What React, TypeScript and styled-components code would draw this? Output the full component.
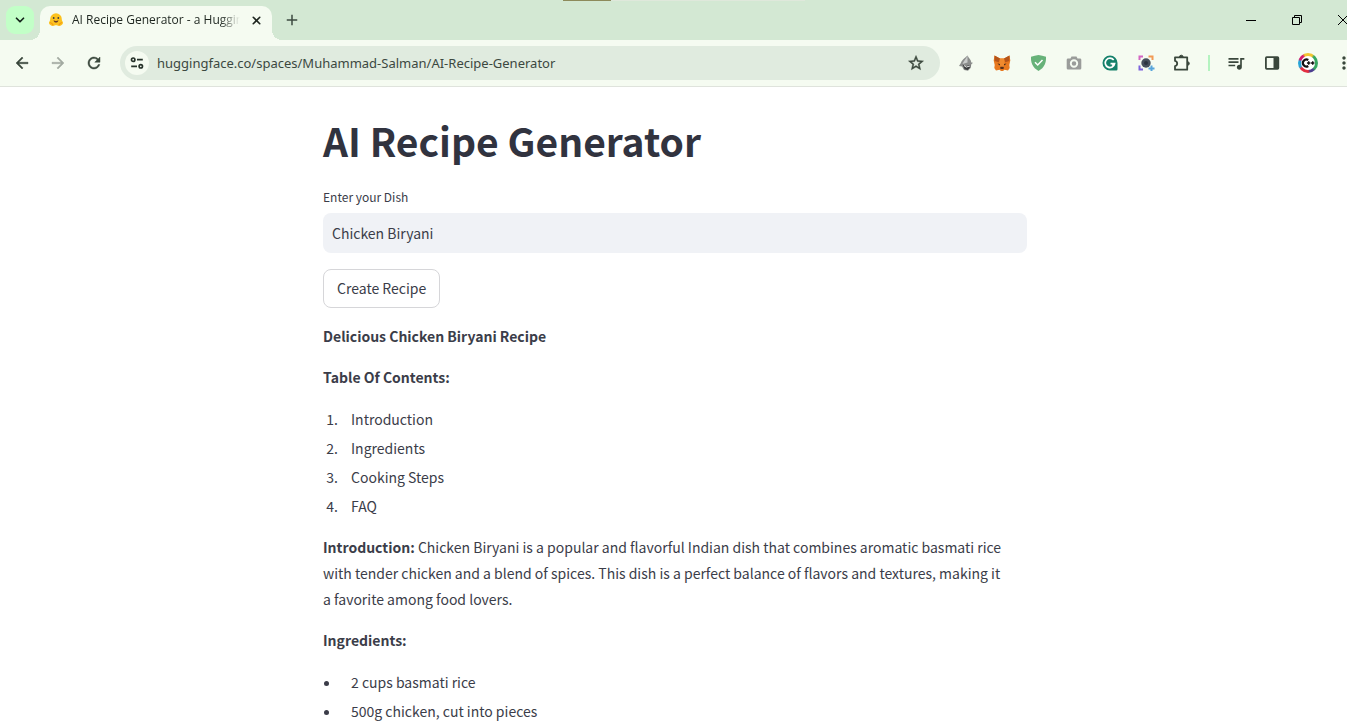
import React, { useState } from "react";
import styled, { createGlobalStyle, css } from "styled-components";
import { ChevronDown, X } from "lucide-react";
import {
  MdAdd,
  MdArrowBack,
  MdArrowForward,
  MdMoreVert,
  MdQueueMusic,
  MdRefresh,
  MdStarBorder,
} from "react-icons/md";

const Global = createGlobalStyle`
  * { box-sizing: border-box; }
  html, body { margin: 0; overflow: hidden; background: #fff; }
  button { font: inherit; color: inherit; border: 0; background: none; padding: 0; cursor: pointer; }
`;

const uiFont = `"Noto Sans", "Open Sans", sans-serif`;
const pageFont = `"Noto Sans CJK SC", "Noto Sans CJK JP", sans-serif`;

/* The window runs past the right edge of the viewport, as a maximised one does. */
const Window = styled.div`
  width: calc(100% + 19px);
  font-family: ${uiFont};
`;

const TabStrip = styled.header`
  display: flex;
  align-items: flex-start;
  height: 40px;
  padding-left: 6px;
  background: #d3e8d3;
  position: relative;
`;

const TabSearch = styled.button`
  display: grid;
  place-items: center;
  width: 28px;
  height: 28px;
  margin: 6px 6px 0 0;
  border-radius: 9px;
  background: #c2ffc7;
  color: #14231a;
`;

const Tab = styled.div`
  position: relative;
  display: flex;
  align-items: center;
  width: 232px;
  height: 34px;
  margin-top: 6px;
  padding: 0 6px 6px 8px;
  border-radius: 10px 10px 0 0;
  background: #f5fbf1;

  &::before,
  &::after {
    content: "";
    position: absolute;
    bottom: 0;
    width: 10px;
    height: 10px;
  }
  &::before {
    right: 100%;
    background: radial-gradient(circle at 0 0, transparent 10px, #f5fbf1 10px);
  }
  &::after {
    left: 100%;
    background: radial-gradient(circle at 100% 0, transparent 10px, #f5fbf1 10px);
  }
`;

const TabTitle = styled.span`
  flex: 1;
  margin-left: 8px;
  overflow: hidden;
  white-space: nowrap;
  font-family: "Open Sans", "Noto Sans", sans-serif;
  font-size: 12px;
  line-height: 20px;
  color: #1d251f;
  mask-image: linear-gradient(to right, #000 calc(100% - 20px), transparent);
`;

const StripButton = styled.button`
  display: grid;
  place-items: center;
  width: 20px;
  height: 20px;
  margin-left: 6px;
  color: #1d251f;
`;

const NewTab = styled(StripButton)`
  margin: 10px 0 0 10px;
  color: #3d4a40;
`;

const WindowControls = styled.div`
  display: flex;
  margin-left: auto;
`;

const WindowButton = styled.button`
  display: grid;
  place-items: center;
  width: 46px;
  height: 40px;
`;

/* Sliver of the screen recorder bar docked at the top of the display. */
const DockedBar = styled.div`
  position: absolute;
  top: 0;
  left: 563px;
  width: 242px;
  height: 1px;
  background: linear-gradient(to right, #8d8a5b 48px, #dfe8db 48px);
`;

const Toolbar = styled.nav`
  display: flex;
  align-items: center;
  height: 47px;
  padding: 0 4px;
  background: #f5fbf1;
  border-bottom: 1px solid #dfe3dc;
`;

const ToolButton = styled.button<{ $muted?: boolean; $heavy?: boolean }>`
  display: grid;
  place-items: center;
  width: 36px;
  height: 34px;
  color: ${(p) => (p.$muted ? "#a3aba2" : "#3a473c")};

  ${(p) =>
    p.$heavy &&
    css`
      path:not([fill="none"]) {
        stroke: currentColor;
        stroke-width: 0.6px;
      }
    `}
`;

const AddressBar = styled.div`
  flex: 1;
  display: flex;
  align-items: center;
  height: 34px;
  margin: 0 8px;
  padding: 0 6px 0 5px;
  border-radius: 17px;
  background: #e0ebdf;
`;

const SiteInfo = styled.button`
  display: grid;
  place-items: center;
  width: 24px;
  height: 24px;
  border-radius: 12px;
  background: #f5fbf1;
`;

const Url = styled.input`
  flex: 1;
  min-width: 0;
  margin-left: 8px;
  padding: 0;
  border: 0;
  outline: 0;
  background: transparent;
  font-family: ${uiFont};
  font-size: 13px;
  line-height: 20px;
  color: #3c483f;
`;

const Divider = styled.span`
  width: 2px;
  height: 16px;
  margin: 0 8px;
  background: #b4f3c0;
`;

const Page = styled.div`
  padding: 27px 16px 0 0;
`;

const Main = styled.main`
  max-width: 704px;
  margin: 0 auto;
  font-family: ${pageFont};
  font-size: 14px;
  line-height: 26px;
  color: #3b3d49;
`;

const Title = styled.h1`
  margin: 0;
  font-size: 39px;
  line-height: 52px;
  font-weight: 700;
  color: #31333f;
`;

const Field = styled.div`
  display: flex;
  flex-direction: column;
  margin-top: 21px;
`;

const Label = styled.label`
  font-size: 12px;
  line-height: 20px;
  margin-bottom: 6px;
`;

const DishInput = styled.input`
  height: 40px;
  padding: 0 9px;
  border: 0;
  border-radius: 8px;
  outline: 0;
  background: #f0f2f6;
  font: inherit;
  color: inherit;
`;

const CreateButton = styled.button`
  display: block;
  height: 39px;
  margin: 16px 0 15px;
  padding: 0 13px 2px;
  border: 1px solid #d6d6d9;
  border-radius: 8px;
  background: #fff;
`;

const Paragraph = styled.p`
  margin: 0 0 15px;
`;

const Strong = styled.strong`
  font-weight: 600;
`;

const listStyle = css`
  margin: 0 0 13px;
  padding: 0;
  li {
    margin-left: 18px;
    padding: 1px 0 2px 10px;
  }
`;

const NumberedList = styled.ol`
  ${listStyle}
`;

const BulletList = styled.ul`
  ${listStyle}
`;

const HuggingFace = () => (
  <svg width="16" height="16" viewBox="0 0 16 16">
    <path d="M8 1.2a5.8 5.8 0 0 1 5.8 5.8c0 1 .1 1.700 .7 2.400.9 1.100.5 2.500-.5 3.300-1.400 1.200-3.300 1.600-4.600.9-.9-.5-1.900-.5-2.800 0-1.300.7-3.200.3-4.600-.9-1-.8-1.400-2.200-.5-3.300.6-.7.7-1.400.7-2.400A5.800 5.800 0 0 1 8 1.200Z" fill="#fcc21f" />
    <path d="M2 10.500c1 .2 2.300 1 3.200 2.600M14 10.500c-1 .2-2.300 1-3.200 2.600" fill="none" stroke="#f39a17" strokeWidth="1.200" />
    <circle cx="5.700" cy="6" r=".9" fill="#3a3b45" />
    <circle cx="10.300" cy="6" r=".9" fill="#3a3b45" />
    <path d="M5.600 8.200c1.400 1 3.400 1 4.800 0-.1 1.500-1.100 2.300-2.400 2.300S5.700 9.700 5.600 8.200Z" fill="#6b3a25" />
  </svg>
);

const Tune = () => (
  <svg width="16" height="16" viewBox="0 0 16 16" fill="none" stroke="#26322a" strokeWidth="1.700">
    <circle cx="4.200" cy="4.700" r="1.700" />
    <path d="M8 4.700h5.800M2.200 11.300H8" />
    <circle cx="11.800" cy="11.300" r="1.700" />
  </svg>
);

const Helmet = () => (
  <svg width="16" height="18" viewBox="0 0 16 18">
    <path d="M9.500 1.500C6.500 4.500 3.500 6 2.600 9.500L1 12l3 .5 2 3.500 4 .8 2.800-3 .4-3.400 1.800-1.600-1.700-.3C13 5.500 11 4.500 9.500 1.500Z" fill="#8b8d8c" />
    <path d="M9.500 1.500C8 5 5.500 7 4.500 10l5-1.500Z" fill="#c9cbca" />
    <path d="m4.500 10.500 3 1.800 5-1.600-.5 2.800-2.300 2.500-3-.7Z" fill="#3b3d3d" />
    <path d="m6 11.500 2.200 1.600 4-1.200" fill="none" stroke="#e5e6e5" />
  </svg>
);

const Fox = () => (
  <svg width="18" height="18" viewBox="0 0 18 18">
    <path d="m1.500 1.500 5.500 3h4l5.500-3 .8 5-1 4.500.4 3-1.700 2.500-3.500-.8-1.500 1.300H8l-1.500-1.300-3.500.8L1.300 14l.4-3-1-4.500Z" fill="#e8781e" />
    <path d="m1.500 1.500 5.500 3-1.300 3.800-4-1.300ZM16.500 1.500l-5.500 3 1.300 3.800 4-1.300Z" fill="#b4541a" />
    <path d="m7 4.500-.5 5 1.300 4h2.400l1.300-4-.5-5Z" fill="#f08a2e" />
    <path d="m4.500 9.500 2.500.6-.4 1.500ZM13.500 9.500l-2.500.6.4 1.500Z" fill="#33251f" />
    <path d="m7.200 13.300.5-.6h2.600l.5.600-.3 1.800h-3Z" fill="#54301d" />
  </svg>
);

const Shield = () => (
  <svg width="17" height="18" viewBox="0 0 17 18">
    <path d="M8.500 1C11 1.300 13.500 1.800 16 2.800c.3 6.200-1.500 10.700-7.500 14.200C2.500 13.500.7 9 1 2.800 3.500 1.800 6 1.300 8.500 1Z" fill="#67b279" />
    <path d="m5 8.300 2.700 2.700L12.500 6" fill="none" stroke="#fff" strokeWidth="1.500" />
  </svg>
);

const Camera = () => (
  <svg width="16" height="16" viewBox="0 0 16 16">
    <path d="M2 3.500h2.500L5.500 1.500h5l1 2H14a1.300 1.300 0 0 1 1.300 1.300v8.400a1.300 1.300 0 0 1-1.300 1.300H2a1.300 1.300 0 0 1-1.300-1.300V4.800A1.300 1.300 0 0 1 2 3.500Z" fill="#9a9c9a" />
    <circle cx="8" cy="8.500" r="3.200" fill="#9a9c9a" stroke="#f5fbf1" strokeWidth="1.900" />
  </svg>
);

const Grammar = () => (
  <svg width="16" height="16" viewBox="0 0 16 16">
    <path d="M8 .5a7.500 7.500 0 0 1 7.500 7.500v6.300a1.200 1.200 0 0 1-1.200 1.200H8A7.500 7.500 0 0 1 8 .5Z" fill="#14806a" />
    <path d="M11.700 5A4.700 4.700 0 1 0 12.600 8.600H8.500M12.300 8.600l-2 2.200" fill="none" stroke="#fff" strokeWidth="1.700" />
  </svg>
);

const Capture = () => (
  <svg width="18" height="18" viewBox="0 0 18 18" fill="none" strokeWidth="2">
    <path d="M2.500 6V2.500H6" stroke="#d466c3" />
    <path d="M11.500 2.500h4V6" stroke="#f29a55" />
    <path d="M2.500 11.500V15.500H6" stroke="#7d62dd" />
    <path d="M14.500 11.500v5.500M11.500 14.500h6" stroke="#57a5dc" />
    <circle cx="9" cy="9" r="4.700" fill="#46505c" />
    <circle cx="9" cy="9" r="2" fill="#2c3540" />
  </svg>
);

const Puzzle = () => (
  <svg width="18" height="18" viewBox="0 0 18 18" fill="none" stroke="#3a473c" strokeWidth="1.800" strokeLinejoin="round">
    <path d="M2 3.300H14.200V15.700H2V12.200a2.700 2.700 0 0 0 0-5.300Z" />
    <path d="M6.500 3a1.800 1.800 0 0 1 3.600 0ZM14.500 7.700a1.800 1.800 0 0 1 0 3.600Z" fill="#3a473c" strokeWidth="1" />
  </svg>
);

const SidePanel = () => (
  <svg width="16" height="16" viewBox="0 0 16 16" fill="none" stroke="#3a473c">
    <rect x="1.900" y="2.100" width="12.400" height="11.800" rx=".8" strokeWidth="1.800" />
    <path d="M9.500 2h4.800v12H9.500Z" fill="#3a473c" stroke="none" />
  </svg>
);

const AvatarRing = styled.span`
  display: grid;
  place-items: center;
  width: 20px;
  height: 20px;
  border-radius: 50%;
  background: conic-gradient(#f2c531 0 8%, #36a862 12% 36%, #4c3d8f 40% 46%, #e32e40 50% 64%, #26a5d8 68% 78%, #d51a6b 82% 90%, #f2c531 94%);
`;

const AvatarFace = styled.svg`
  width: 14px;
  height: 14px;
  border-radius: 50%;
  background: #fff;
`;

const Avatar = () => (
  <AvatarRing>
    <AvatarFace viewBox="0 0 16 16" fill="none" stroke="#111">
      <path d="M8.300 4.600A4 4 0 1 0 8.300 11.400" strokeWidth="2.600" />
      <path d="M6.800 8h4M8.800 6v4M11.400 8h4M13.400 6v4" strokeWidth="1.600" />
    </AvatarFace>
  </AvatarRing>
);

const extensions = [
  { name: "Helmet", Icon: Helmet },
  { name: "Wallet", Icon: Fox },
  { name: "Ad blocker", Icon: Shield },
  { name: "Screenshot", Icon: Camera },
  { name: "Grammar", Icon: Grammar },
  { name: "Capture", Icon: Capture },
  { name: "Extensions", Icon: Puzzle },
];

const contents = ["Introduction", "Ingredients", "Cooking Steps", "FAQ"];
const ingredients = ["2 cups basmati rice", "500g chicken, cut into pieces"];

export default function App() {
  const [dish, setDish] = useState("Chicken Biryani");

  return (
    <>
      <Global />
      <Window>
        <TabStrip>
          <DockedBar />
          <TabSearch aria-label="Search tabs">
            <ChevronDown size={14} strokeWidth={3} />
          </TabSearch>
          <Tab>
            <HuggingFace />
            <TabTitle>AI Recipe Generator - a Hugging Face</TabTitle>
            <StripButton aria-label="Close tab">
              <X size={13} strokeWidth={3} />
            </StripButton>
          </Tab>
          <NewTab aria-label="New tab">
            <MdAdd size={18} />
          </NewTab>
          <WindowControls>
            <WindowButton aria-label="Minimise">
              <svg width="10" height="10" viewBox="0 0 10 10" stroke="#000">
                <path d="M0 5.500h10" />
              </svg>
            </WindowButton>
            <WindowButton aria-label="Restore">
              <svg width="10" height="10" viewBox="0 0 10 10" stroke="#000" fill="none">
                <path d="M.5 2.500h7v7h-7ZM2.500 2.500v-2h7v7h-2" />
              </svg>
            </WindowButton>
            <WindowButton aria-label="Close">
              <svg width="10" height="10" viewBox="0 0 10 10" stroke="#000">
                <path d="m0 0 10 10M10 0 0 10" />
              </svg>
            </WindowButton>
          </WindowControls>
        </TabStrip>

        <Toolbar>
          <ToolButton aria-label="Back" $heavy><MdArrowBack size={18} /></ToolButton>
          <ToolButton aria-label="Forward" $muted $heavy><MdArrowForward size={18} /></ToolButton>
          <ToolButton aria-label="Reload" $heavy><MdRefresh size={18} /></ToolButton>
          <AddressBar>
            <SiteInfo aria-label="Site information"><Tune /></SiteInfo>
            <Url aria-label="Address" defaultValue="huggingface.co/spaces/Muhammad-Salman/AI-Recipe-Generator" />
            <ToolButton aria-label="Bookmark" $heavy><MdStarBorder size={18} /></ToolButton>
          </AddressBar>
          {extensions.map(({ name, Icon }) => (
            <ToolButton key={name} aria-label={name}><Icon /></ToolButton>
          ))}
          <Divider />
          <ToolButton aria-label="Media"><MdQueueMusic size={20} /></ToolButton>
          <ToolButton aria-label="Side panel"><SidePanel /></ToolButton>
          <ToolButton aria-label="Profile"><Avatar /></ToolButton>
          <ToolButton aria-label="Menu"><MdMoreVert size={20} /></ToolButton>
        </Toolbar>

        <Page>
          <Main>
            <Title>AI Recipe Generator</Title>
            <Field>
              <Label htmlFor="dish">Enter your Dish</Label>
              <DishInput id="dish" value={dish} onChange={(e) => setDish(e.target.value)} />
            </Field>
            <CreateButton>Create Recipe</CreateButton>
            <Paragraph><Strong>Delicious Chicken Biryani Recipe</Strong></Paragraph>
            <Paragraph><Strong>Table Of Contents:</Strong></Paragraph>
            <NumberedList>
              {contents.map((c) => <li key={c}>{c}</li>)}
            </NumberedList>
            <Paragraph>
              <Strong>Introduction:</Strong> Chicken Biryani is a popular and flavorful Indian dish that
              combines aromatic basmati rice with tender chicken and a blend of spices. This dish is a
              perfect balance of flavors and textures, making it a&nbsp;favorite among food lovers.
            </Paragraph>
            <Paragraph><Strong>Ingredients:</Strong></Paragraph>
            <BulletList>
              {ingredients.map((c) => <li key={c}>{c}</li>)}
            </BulletList>
          </Main>
        </Page>
      </Window>
    </>
  );
}
